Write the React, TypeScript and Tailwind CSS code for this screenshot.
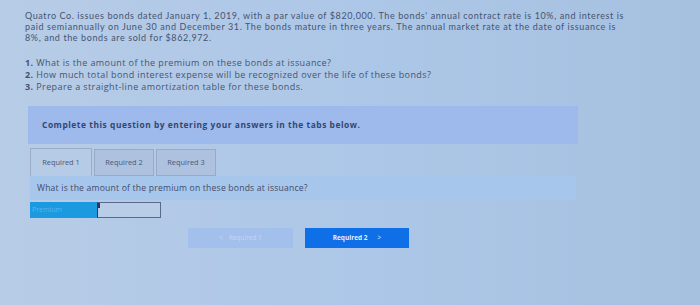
import React from 'react';

export default function App() {
  return (
    <div
      className="w-[700px] h-[305px] overflow-hidden bg-gradient-to-r from-[#b7cce6] via-[#adc7e8] to-[#a6c0e0] text-[#3d4a66]"
      style={{ fontFamily: '"Open Sans", "Liberation Sans", sans-serif' }}
    >
      <div className="pl-[25px] pt-[10px]">
        <p
          className="text-[9px] leading-[11px] tracking-[0.6px] text-[#465470] whitespace-nowrap"
          style={{ fontFamily: 'Lato, "Open Sans", sans-serif' }}
        >
          Quatro Co. issues bonds dated January 1, 2019, with a par value of $820,000. The bonds' annual contract rate is 10%, and interest is
          <br />
          paid semiannually on June 30 and December 31. The bonds mature in three years. The annual market rate at the date of issuance is
          <br />
          8%, and the bonds are sold for $862,972.
        </p>

        <ol className="mt-[14px] text-[9px] leading-[12px] tracking-[0.4px] text-[#465470]">
          <li><span className="font-bold">1.</span> What is the amount of the premium on these bonds at issuance?</li>
          <li><span className="font-bold">2.</span> How much total bond interest expense will be recognized over the life of these bonds?</li>
          <li><span className="font-bold">3.</span> Prepare a straight-line amortization table for these bonds.</li>
        </ol>
      </div>

      <div className="ml-[28px] mt-[13px] w-[550px]">
        <div className="h-[38px] bg-[#9eb9ec] flex items-center pl-[14px]">
          <span className="text-[8.4px] font-bold text-[#34466e] tracking-[0.55px]">
            Complete this question by entering your answers in the tabs below.
          </span>
        </div>

        <div className="mt-[4px] flex items-end gap-[2px] pl-[2px]">
          <div className="w-[62px] h-[28px] bg-[#b6cbe5] border border-b-0 border-[#9daccb] flex items-center justify-center text-[7.4px] text-[#4a5878]">
            Required 1
          </div>
          <div className="w-[60px] h-[27px] bg-[#aec2df] border border-[#9aa9c6] flex items-center justify-center text-[7.4px] text-[#4a5878]">
            Required 2
          </div>
          <div className="w-[60px] h-[27px] bg-[#aec2df] border border-[#9aa9c6] flex items-center justify-center text-[7.4px] text-[#4a5878]">
            Required 3
          </div>
        </div>

        <div className="ml-[2px] w-[546px] h-[24px] bg-[#a7c6ec] flex items-center pl-[7px] text-[8.6px] tracking-[0.2px] text-[#3f4c68]">
          What is the amount of the premium on these bonds at issuance?
        </div>

        <div className="ml-[2px] mt-[2px] flex h-[16px]">
          <div className="w-[67px] bg-[#1c9ae0] text-[7px] text-[#5ab4ee] flex items-center pl-[2px]">
            Premium
          </div>
          <div className="w-[64px] bg-[#b9cde8] border border-[#58698a] border-l-[#2a3550] relative">
            <span className="absolute left-0 top-0 w-[2px] h-[5px] bg-[#2a3550]"></span>
          </div>
        </div>

        <div className="mt-[10px] flex gap-[12px] pl-[160px]">
          <div className="w-[105px] h-[20px] bg-[#a3bfec] flex items-center justify-center gap-[6px] text-[6.5px] text-[#c3d6f5]">
            <span>&lt;</span>
            <span>Required 1</span>
          </div>
          <div className="w-[104px] h-[20px] bg-[#0f6fe6] flex items-center justify-center gap-[10px] text-[6.5px] font-bold text-[#e4eefc]">
            <span>Required 2</span>
            <span className="font-normal">&gt;</span>
          </div>
        </div>
      </div>
    </div>
  );
}
